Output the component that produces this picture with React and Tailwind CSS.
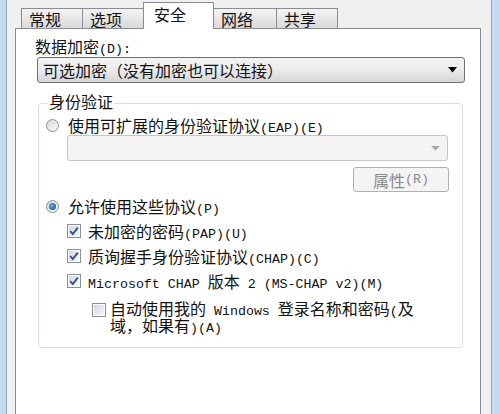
import React from 'react';

// splits a label into CJK runs and half-width (ASCII) runs, like SimSun renders them
function T({ children }) {
  const parts = children.split(/([\x20-\x7e]+)/).filter(Boolean);
  return parts.map((p, i) =>
    /^[\x20-\x7e]+$/.test(p) ? (
      <span key={i} className="[font-family:'Liberation_Mono',monospace] text-[13.3px] leading-[10px] whitespace-pre">
        {p}
      </span>
    ) : (
      <span key={i}>{p}</span>
    )
  );
}

function Radio({ checked }) {
  return (
    <span className="relative flex h-[13px] w-[13px] shrink-0 items-center justify-center rounded-full border border-[#8e8f8f] bg-linear-to-br from-[#d6d6d6] to-[#fbfbfb]">
      {checked && (
        <span className="h-[7px] w-[7px] rounded-full bg-[radial-gradient(circle_at_40%_40%,#6fb0e8,#1f5fa8_70%)]" />
      )}
    </span>
  );
}

function Check({ checked }) {
  return (
    <span className="flex h-[14px] w-[14px] shrink-0 items-center justify-center border border-[#8e8f8f] bg-white">
      <span className="relative flex h-[10px] w-[10px] items-center justify-center bg-linear-to-br from-[#cfd8e2] to-[#f5f7f9]">
        {checked && (
          <svg width="12" height="12" viewBox="0 0 12 12" className="absolute">
            <path d="M2.2 6.2 L4.8 9 L9.8 2.6" fill="none" stroke="#34508f" strokeWidth="1.9" />
          </svg>
        )}
      </span>
    </span>
  );
}

function Tab({ label, width, selected }) {
  if (selected) {
    return (
      <div
        className={`relative z-10 -mb-px -ml-px h-[27px] ${width} border border-b-0 border-[#898c95] bg-white pl-[10px] pt-[2px] leading-[18px]`}
      >
        {label}
      </div>
    );
  }
  return (
    <div
      className={`-ml-px h-[20px] ${width} border border-b-0 border-[#898c95] bg-linear-to-b from-[#f4f4f4] to-[#d9d9d9] pl-[7px] pt-px leading-[18px]`}
    >
      {label}
    </div>
  );
}

export default function App() {
  return (
    <div className="flex h-[414px] w-[500px] overflow-hidden bg-[#f0f0f0] text-[16px] text-[#111] [font-family:'Noto_Sans_CJK_SC',sans-serif]">
      <div className="w-[6px] bg-[#c3daf1]" />
      <div className="w-px bg-[#8fa5bc]" />
      <div className="w-[8px]" />

      <div className="flex w-[466px] flex-col">
        <div className="flex h-[28px] items-end pl-[7px]">
          <Tab label="常规" width="w-[62px]" />
          <Tab label="选项" width="w-[62px]" />
          <Tab label="安全" width="w-[71px]" selected />
          <Tab label="网络" width="w-[64px]" />
          <Tab label="共享" width="w-[62px]" />
        </div>

        <div className="flex flex-1 flex-col border border-b-0 border-[#898c95] bg-white pl-[21px] pr-[15px]">
          <div className="-ml-[2px] mt-[8px] leading-[18px]">
            <T>数据加密(D):</T>
          </div>

          <div className="mt-[2px] flex h-[26px] items-center justify-between rounded-[3px] border border-[#707070] bg-linear-to-b from-[#f3f3f3] via-[#ebebeb] to-[#d6d6d6] pl-[5px] pr-[7px] leading-[18px]">
            <span>可选加密（没有加密也可以连接）</span>
            <svg width="9" height="6" viewBox="0 0 9 6">
              <path d="M0 0 H9 L4.5 5.5 Z" fill="#000" />
            </svg>
          </div>

          <div className="relative ml-px mr-[2px] mt-[20px] flex flex-col rounded-[4px] border border-[#d5dfe5] pb-[13px] pl-[7px] pr-[14px] pt-[11px]">
            <span className="absolute -top-[12px] left-[9px] bg-white px-px leading-[18px]">身份验证</span>

            <div className="flex h-[20px] items-center gap-[9px] leading-[18px]">
              <Radio />
              <span>
                <T>使用可扩展的身份验证协议(EAP)(E)</T>
              </span>
            </div>

            <div className="ml-[21px] flex h-[26px] items-center justify-end rounded-[3px] border border-[#c3c7ca] bg-[#f4f4f4] pr-[7px]">
              <svg width="9" height="5" viewBox="0 0 9 5">
                <path d="M0 0 H9 L4.5 4.5 Z" fill="#a7a7a7" />
              </svg>
            </div>

            <div className="-mr-px mt-[6px] flex h-[25px] w-[96px] items-center justify-center self-end rounded-[3px] border border-[#adb2b5] bg-[#f4f4f4] leading-[18px] text-[#8a8a8a]">
              <T>属性(R)</T>
            </div>

            <div className="mt-[4px] flex h-[20px] items-center gap-[9px] leading-[18px]">
              <Radio checked />
              <span>
                <T>允许使用这些协议(P)</T>
              </span>
            </div>

            <div className="ml-[21px] flex flex-col">
              <div className="mt-[5px] flex h-[20px] items-center gap-[7px] leading-[18px]">
                <Check checked />
                <span>
                  <T>未加密的密码(PAP)(U)</T>
                </span>
              </div>
              <div className="mt-[5px] flex h-[20px] items-center gap-[7px] leading-[18px]">
                <Check checked />
                <span>
                  <T>质询握手身份验证协议(CHAP)(C)</T>
                </span>
              </div>
              <div className="mt-[5px] flex h-[20px] items-center gap-[7px] leading-[18px]">
                <Check checked />
                <span>
                  <T>Microsoft CHAP 版本 2 (MS-CHAP v2)(M)</T>
                </span>
              </div>
              <div className="ml-[25px] mt-[9px] flex items-start gap-[4px]">
                <span className="mt-[3px]">
                  <Check />
                </span>
                <div className="flex flex-col">
                  <div className="h-[17px] leading-[17px]">
                    <T>自动使用我的 Windows 登录名称和密码(及</T>
                  </div>
                  <div className="h-[17px] leading-[17px]">
                    <T>域，如果有)(A)</T>
                  </div>
                </div>
              </div>
            </div>
          </div>
        </div>
      </div>

      <div className="w-[10px]" />
      <div className="w-px bg-[#8fa5bc]" />
      <div className="flex-1 bg-[#c3daf1]" />
    </div>
  );
}
